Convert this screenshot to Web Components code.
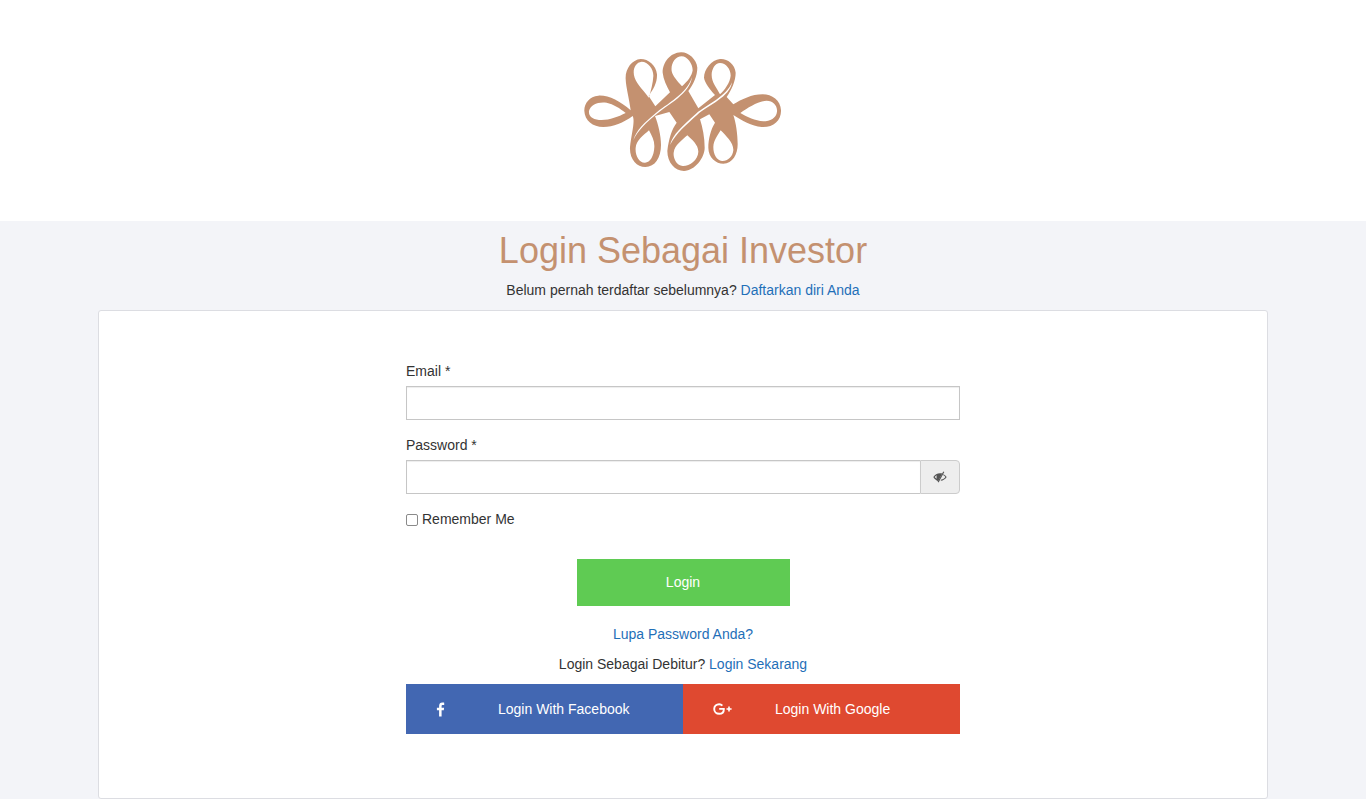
<!DOCTYPE html>
<html lang="id">
<head>
<meta charset="utf-8">
<title>Login Sebagai Investor</title>
<style>
html,body{margin:0;padding:0;}
body{background:#f3f4f8;font-family:"Liberation Sans",Arial,sans-serif;font-size:14px;line-height:20px;color:#333;height:799px;overflow:hidden;}
</style>
</head>
<body>
<brand-header></brand-header>
<page-title heading="Login Sebagai Investor">
    Belum pernah terdaftar sebelumnya? <a href="#" style="color:#1f6fb8;text-decoration:none">Daftarkan diri Anda</a>
</page-title>
<login-card>
    <form-field label="Email *" type="text"></form-field>
    <password-field label="Password *"></password-field>
    <remember-check>Remember Me</remember-check>
    <login-button>Login</login-button>
    <text-line style="margin-top:18px"><a href="#" style="color:#1f6fb8;text-decoration:none">Lupa Password Anda?</a></text-line>
    <text-line style="margin-top:10px">Login Sebagai Debitur? <a href="#" style="color:#1f6fb8;text-decoration:none">Login Sekarang</a></text-line>
    <social-row>
        <social-button network="facebook">Login With Facebook</social-button>
        <social-button network="google">Login With Google</social-button>
    </social-row>
</login-card>

<script>
class BrandHeader extends HTMLElement{
    constructor(){
        super();
        this.attachShadow({mode: 'open'});
        this.shadowRoot.innerHTML = `
        <style>
        :host{display:flex;justify-content:center;align-items:center;height:221px;background:#fff;}
        svg{display:block;width:226px;height:140px;}
        </style>
        <svg viewBox="0 0 678 420" aria-label="logo">
            <path fill="#c49170" fill-rule="evenodd" d="
            M182 208 C150 180 115 162 85 164 C58 166 42 188 43 210 C44 238 68 258 100 258 C130 258 160 245 188 225
            C196 240 184 280 180 318 C178 355 200 378 226 378 C255 378 273 350 273 312 C273 285 265 250 255 225
            L298 213 L320 245 C305 265 296 295 292 330 C292 365 315 390 342 390 C375 388 404 350 404 320 C404 290 398 260 390 235
            L418 220 L435 245 C422 265 415 295 415 320 C415 350 438 368 460 368 C488 368 503 340 503 310 C503 280 498 245 490 222
            C515 238 545 256 575 258 C610 260 634 238 633 208 C632 178 606 160 578 160 C545 160 515 175 490 190
            L470 168 C485 145 497 120 497 95 C495 68 470 52 450 54 C425 56 402 85 402 110 C404 125 420 145 435 162
            L385 202 L355 150 C370 130 382 105 382 80 C380 55 355 33 333 34 C300 35 278 65 278 95 C280 115 290 135 300 154
            L256 196 L236 165 C250 145 262 125 261 100 C258 72 235 54 212 54 C185 56 165 85 167 114 C168 140 178 175 182 208 Z
            M57 210 C61 191 85 181 110 185 C130 189 150 202 167 216 C145 227 120 237 95 237 C72 237 55 228 57 210 Z
            M215 62 C235 62 251 85 250 105 C249 125 243 150 236 170 C228 155 200 130 194 110 C186 88 195 64 215 62 Z
            M335 46 C352 46 368 68 368 88 C366 105 352 122 336 136 C322 120 308 105 305 90 C302 68 316 46 335 46 Z
            M450 66 C468 66 482 85 482 104 C480 125 465 145 450 160 C440 140 425 125 425 102 C425 85 435 66 450 66 Z
            M511 216 C535 199 565 181 590 179 C610 179 623 195 621 212 C619 231 600 241 580 241 C555 239 532 228 511 216 Z
            M237 268 C246 285 254 300 253 318 C252 345 240 366 224 365 C206 364 195 342 197 320 C199 298 220 283 237 268 Z
            M352 283 C366 296 385 312 385 332 C384 358 358 376 338 375 C320 374 309 352 311 335 C314 312 336 298 352 283 Z
            M452 268 C468 285 491 305 490 328 C488 348 472 361 456 360 C440 358 430 340 430 318 C431 298 442 285 452 268 Z"/>
            <g fill="#fff">
                <path d="M190 298 C198 268 224 244 255 218 C288 190 352 158 366 108 C360 158 294 190 259 220 C230 244 204 268 190 298 Z"/>
                <path d="M300 312 C308 280 336 256 378 218 C412 190 470 166 486 124 C480 168 416 192 382 221 C350 250 318 276 300 312 Z"/>
            </g>
        </svg>
        `
    }
}
customElements.define("brand-header", BrandHeader)

class PageTitle extends HTMLElement{
    constructor(){
        super();
        this.attachShadow({mode: 'open'});
        this.shadowRoot.innerHTML = `
        <style>
        :host{display:block;text-align:center;padding-top:10px;}
        h1{margin:0 0 9px;font-size:36px;line-height:40px;font-weight:400;color:#c49170;}
        p{margin:0;height:20px;line-height:20px;}
        </style>
        <h1></h1>
        <p><slot></slot></p>
        `
    }
    connectedCallback(){
        this.shadowRoot.querySelector("h1").textContent = this.getAttribute("heading");
    }
}
customElements.define("page-title", PageTitle)

class LoginCard extends HTMLElement{
    constructor(){
        super();
        this.attachShadow({mode: 'open'});
        this.shadowRoot.innerHTML = `
        <style>
        :host{display:block;box-sizing:border-box;width:1170px;height:489px;margin:10px auto 0;background:#fff;border:1px solid #dcdde2;border-radius:3px;padding-top:50px;}
        .inner{width:554px;margin:0 auto;}
        </style>
        <div class="inner"><slot></slot></div>
        `
    }
}
customElements.define("login-card", LoginCard)

class FormField extends HTMLElement{
    constructor(){
        super();
        this.attachShadow({mode: 'open'});
        this.shadowRoot.innerHTML = `
        <style>
        :host{display:block;margin-bottom:15px;}
        label{display:block;margin-bottom:5px;height:20px;}
        input{display:block;box-sizing:border-box;width:100%;height:34px;border:1px solid #c6c6c6;border-radius:0;background:#fff;outline:none;padding:6px 12px;font:inherit;box-shadow:inset 0 1px 1px rgba(0,0,0,.075);}
        </style>
        <label></label>
        <input>
        `
    }
    connectedCallback(){
        this.shadowRoot.querySelector("label").textContent = this.getAttribute("label");
        this.shadowRoot.querySelector("input").type = this.getAttribute("type") || "text";
    }
}
customElements.define("form-field", FormField)

class PasswordField extends HTMLElement{
    constructor(){
        super();
        this.attachShadow({mode: 'open'});
        this.shadowRoot.innerHTML = `
        <style>
        :host{display:block;margin-bottom:15px;}
        label{display:block;margin-bottom:5px;height:20px;}
        .group{display:flex;height:34px;}
        input{flex:1;min-width:0;box-sizing:border-box;height:34px;border:1px solid #c6c6c6;border-right:none;border-radius:0;background:#fff;outline:none;padding:6px 12px;font:inherit;box-shadow:inset 0 1px 1px rgba(0,0,0,.075);}
        .addon{box-sizing:border-box;width:40px;display:flex;align-items:center;justify-content:center;background:#eee;border:1px solid #ccc;border-radius:0 4px 4px 0;}
        svg{width:14px;height:12px;display:block;}
        </style>
        <label></label>
        <div class="group">
            <input type="password">
            <span class="addon">
                <svg viewBox="0 0 14 12">
                    <path fill="#555" fill-rule="evenodd" d="M0.3 6 C1.8 3.6 4.2 2.2 7 2.2 C7.8 2.2 8.6 2.3 9.3 2.6 L5.1 10.2 C3.2 9.6 1.5 8 0.3 6 Z M3.9 4.2 C3.1 4.6 2.3 5.2 1.7 6 C2.3 6.8 3.1 7.4 3.9 7.8 C3.6 7.3 3.5 6.6 3.5 6 C3.5 5.4 3.6 4.7 3.9 4.2 Z"/>
                    <path fill="#555" d="M10.3 0.4 L11.3 1 L5.6 11.4 L4.6 10.8 Z"/>
                    <path fill="#555" d="M10.5 3.2 C11.8 3.9 12.9 4.8 13.7 6 C12.4 8 10.2 9.6 7.6 9.8 L8.3 8.6 C10 8.2 11.4 7.3 12.4 6 C11.8 5.2 11 4.6 10 4.1 Z"/>
                </svg>
            </span>
        </div>
        `
    }
    connectedCallback(){
        this.shadowRoot.querySelector("label").textContent = this.getAttribute("label");
    }
}
customElements.define("password-field", PasswordField)

class RememberCheck extends HTMLElement{
    constructor(){
        super();
        this.attachShadow({mode: 'open'});
        this.shadowRoot.innerHTML = `
        <style>
        :host{display:block;height:20px;}
        label{display:flex;align-items:center;height:20px;}
        .box{box-sizing:border-box;width:12px;height:12px;margin:1px 4px 0 0;border:1px solid #8a8a8a;border-radius:2px;background:#fff;appearance:none;-webkit-appearance:none;}
        </style>
        <label><input class="box" type="checkbox"><slot></slot></label>
        `
    }
}
customElements.define("remember-check", RememberCheck)

class LoginButton extends HTMLElement{
    constructor(){
        super();
        this.attachShadow({mode: 'open'});
        this.shadowRoot.innerHTML = `
        <style>
        :host{display:block;margin-top:30px;}
        button{display:block;width:213px;height:47px;margin:0 auto;padding:0 0 2px;background:#5fcb53;color:#fff;border:none;outline:none;font:inherit;cursor:pointer;}
        </style>
        <button><slot></slot></button>
        `
    }
}
customElements.define("login-button", LoginButton)

class TextLine extends HTMLElement{
    constructor(){
        super();
        this.attachShadow({mode: 'open'});
        this.shadowRoot.innerHTML = `
        <style>
        :host{display:block;text-align:center;height:20px;line-height:20px;}
        </style>
        <slot></slot>
        `
    }
}
customElements.define("text-line", TextLine)

class SocialRow extends HTMLElement{
    constructor(){
        super();
        this.attachShadow({mode: 'open'});
        this.shadowRoot.innerHTML = `
        <style>
        :host{display:grid;grid-template-columns:277px 277px;margin-top:10px;}
        </style>
        <slot></slot>
        `
    }
}
customElements.define("social-row", SocialRow)

class SocialButton extends HTMLElement{
    constructor(){
        super();
        this.attachShadow({mode: 'open'});
        this.shadowRoot.innerHTML = `
        <style>
        :host{display:grid;grid-template-columns:62px 1fr;align-items:center;height:50px;padding-left:30px;color:#fff;cursor:pointer;}
        :host([network="facebook"]){background:#4267b2;}
        :host([network="google"]){background:#df4930;}
        svg{display:block;}
        </style>
        <span class="icon"></span>
        <span><slot></slot></span>
        `
    }
    connectedCallback(){
        let icon = this.shadowRoot.querySelector(".icon");
        if(this.getAttribute("network") === "facebook"){
            icon.innerHTML = `<svg width="9" height="15" viewBox="0 0 9 15"><path fill="#fff" d="M5.6 14.6 V8.2 H7.8 L8.1 5.7 H5.6 V4.2 C5.6 3.4 5.8 2.9 6.9 2.9 H8.2 V0.7 C8 0.7 7.2 0.6 6.3 0.6 C4.4 0.6 3.1 1.8 3.1 3.9 V5.7 H0.9 V8.2 H3.1 V14.6 Z"/></svg>`;
        }
        else if(this.getAttribute("network") === "google"){
            icon.innerHTML = `<svg width="19" height="12" viewBox="0 0 19 12"><path fill="none" stroke="#fff" stroke-width="1.9" d="M9.4 2.6 C8.5 1.7 7.5 1.2 6.2 1.2 C3.5 1.2 1.2 3.2 1.2 6 C1.2 8.8 3.5 10.8 6.2 10.8 C9 10.8 10.8 9 10.8 6.4 V5.9 H6.2"/><path fill="#fff" d="M15.2 3.6 H16.8 V5.2 H18.6 V6.8 H16.8 V8.4 H15.2 V6.8 H13.5 V5.2 H15.2 Z"/></svg>`;
        }
    }
}
customElements.define("social-button", SocialButton)
</script>
</body>
</html>
